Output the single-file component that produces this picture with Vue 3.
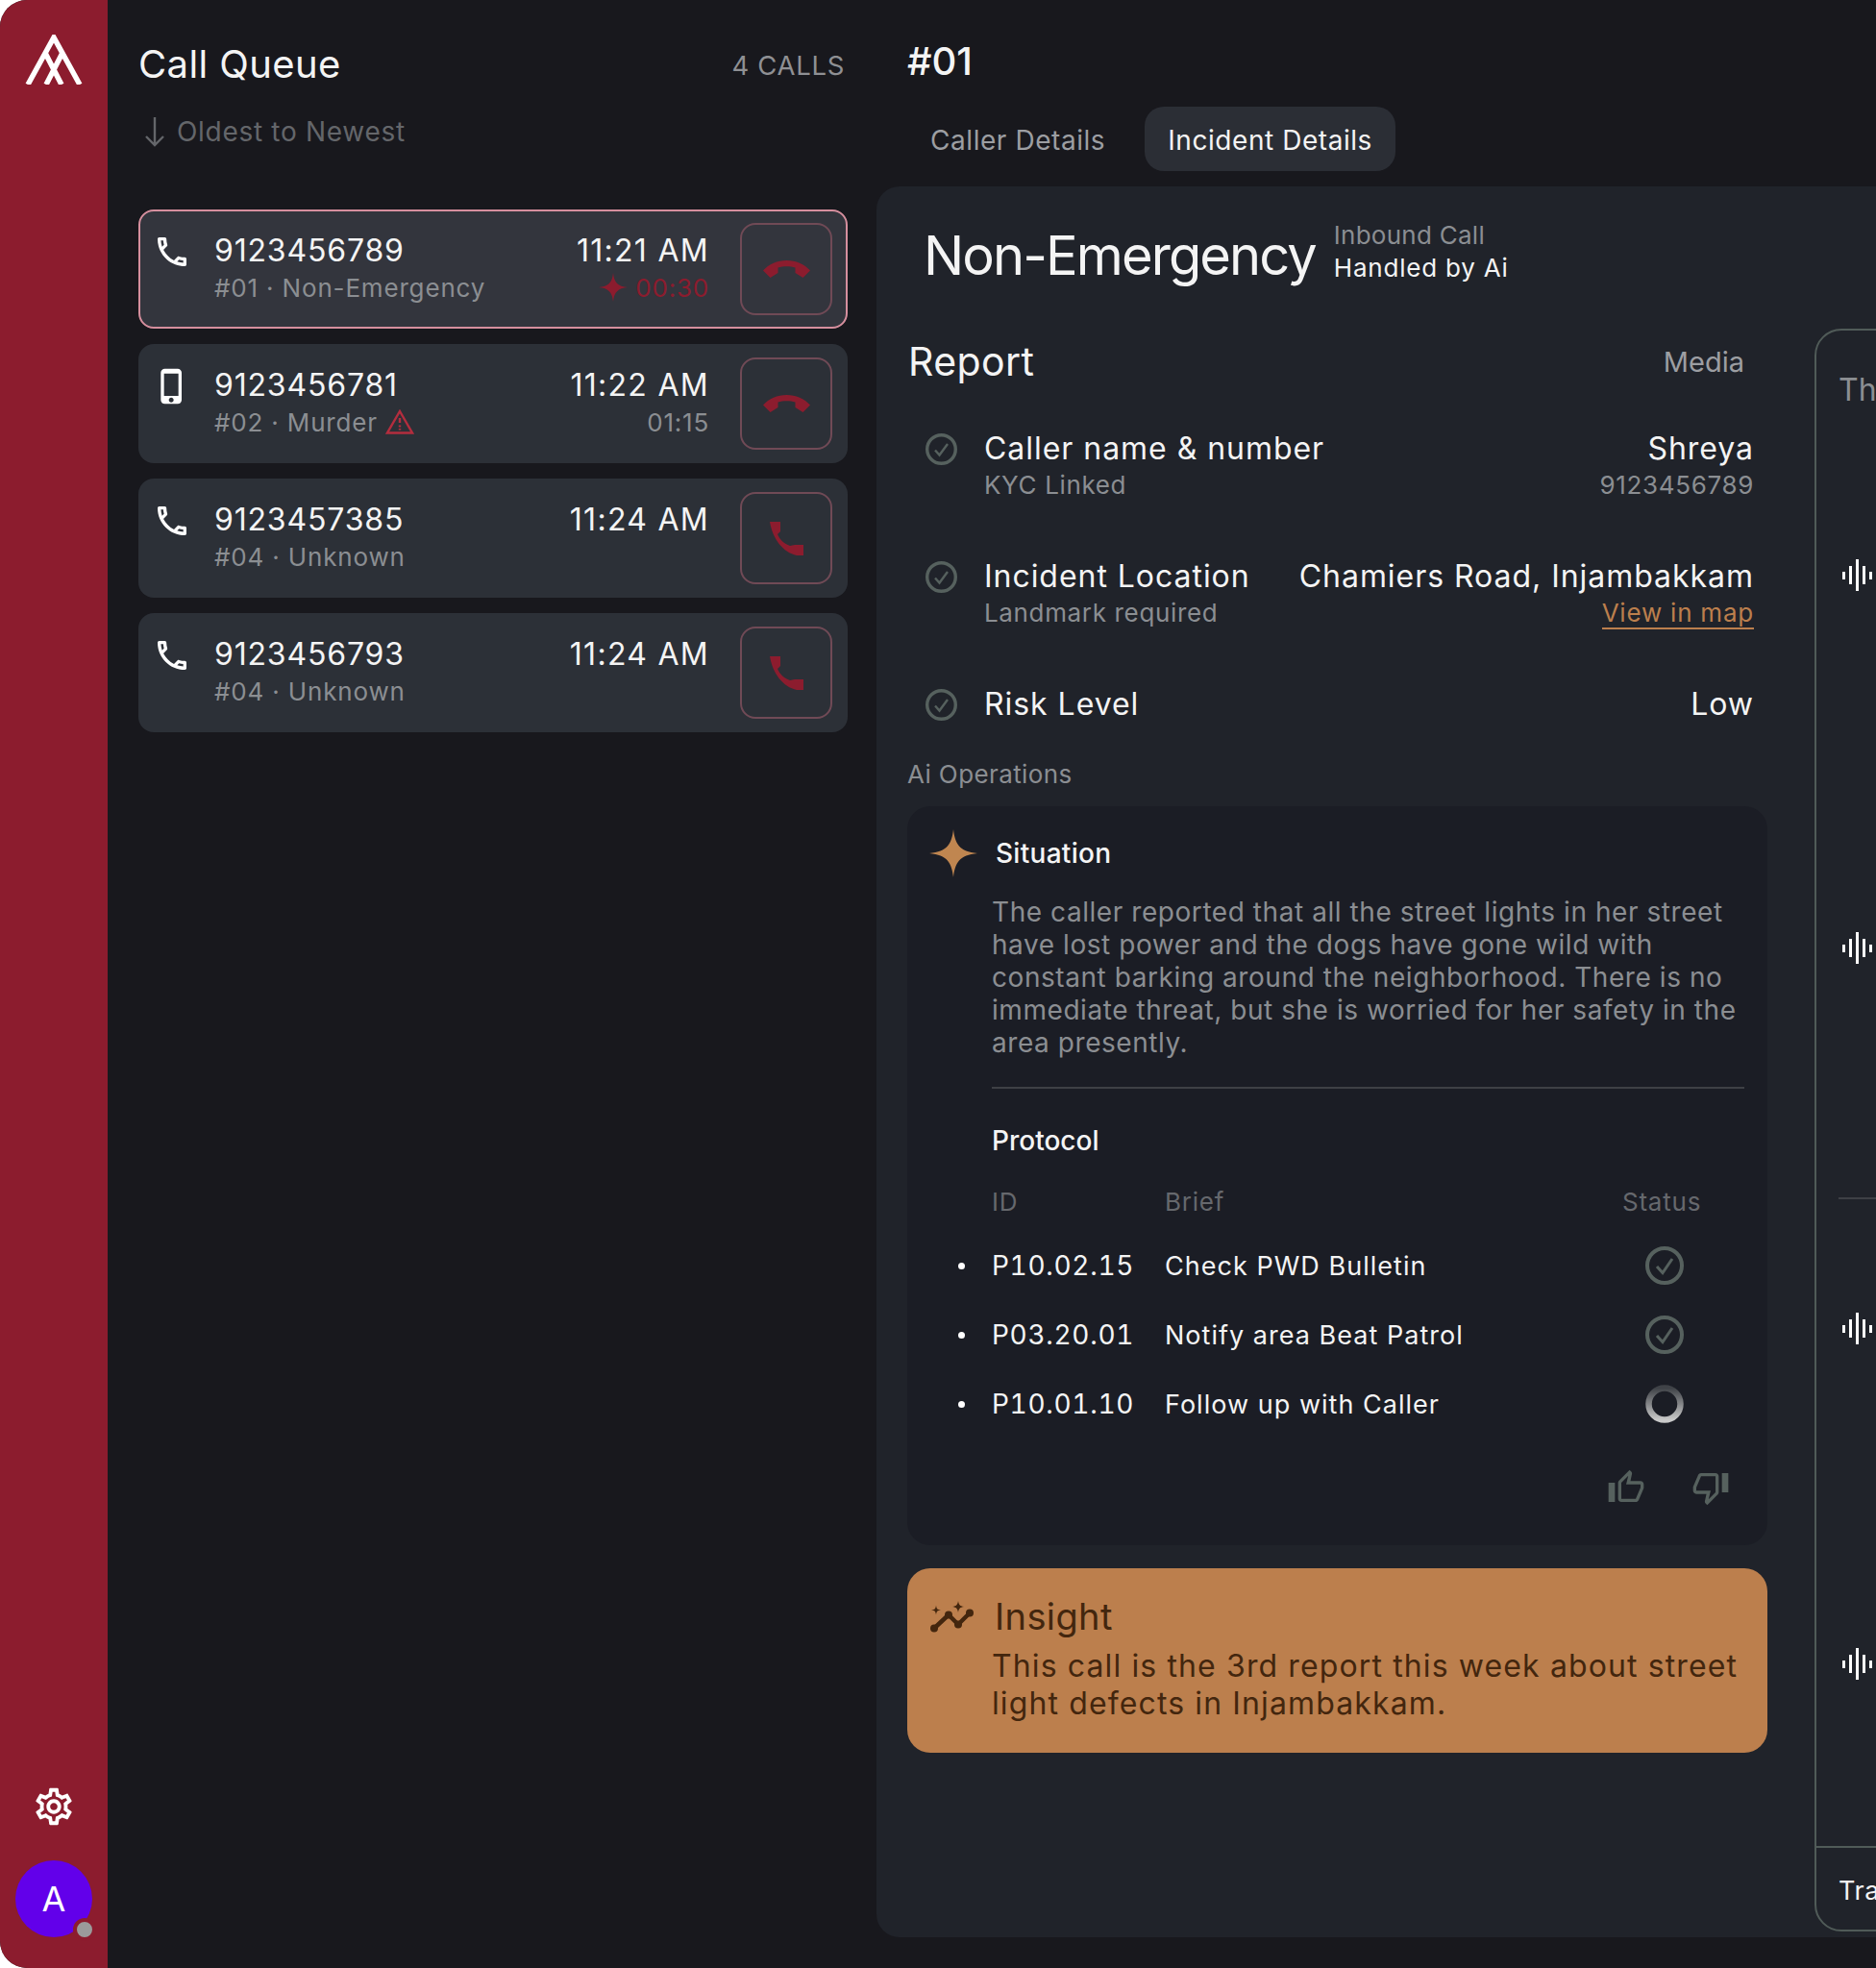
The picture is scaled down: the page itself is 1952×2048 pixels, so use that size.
<script setup>
const calls = [
  { number: '9123456789', meta: '#01 · Non-Emergency', time: '11:21 AM', timer: '00:30', device: 'phone', action: 'end', active: true },
  { number: '9123456781', meta: '#02 · Murder', time: '11:22 AM', elapsed: '01:15', device: 'mobile', action: 'end', warn: true },
  { number: '9123457385', meta: '#04 · Unknown', time: '11:24 AM', device: 'phone', action: 'answer' },
  { number: '9123456793', meta: '#04 · Unknown', time: '11:24 AM', device: 'phone', action: 'answer' }
]

const report = [
  { title: 'Caller name & number', sub: 'KYC Linked', value: 'Shreya', extra: '9123456789' },
  { title: 'Incident Location', sub: 'Landmark required', value: 'Chamiers Road, Injambakkam', link: 'View in map' },
  { title: 'Risk Level', value: 'Low' }
]

const protocol = [
  { id: 'P10.02.15', brief: 'Check PWD Bulletin', done: true },
  { id: 'P03.20.01', brief: 'Notify area Beat Patrol', done: true },
  { id: 'P10.01.10', brief: 'Follow up with Caller', done: false }
]

const phonePath = 'M6.54 5c.06.89.21 1.76.45 2.59l-1.2 1.2c-.41-1.2-.67-2.47-.76-3.79h1.51m9.86 12.02c.85.24 1.72.39 2.6.45v1.49c-1.32-.09-2.59-.35-3.8-.75l1.2-1.19M7.5 3H4c-.55 0-1 .45-1 1 0 9.39 7.61 17 17 17 .55 0 1-.45 1-1v-3.49c0-.55-.45-1-1-1-1.24 0-2.45-.2-3.57-.57-.1-.04-.21-.05-.31-.05-.26 0-.51.1-.71.29l-2.2 2.2c-2.83-1.45-5.15-3.76-6.59-6.59l2.2-2.2c.28-.28.36-.67.25-1.02C8.7 6.45 8.5 5.25 8.5 4c0-.55-.45-1-1-1z'
const mobilePath = 'M15.5 1h-8C6.12 1 5 2.12 5 3.5v17C5 21.88 6.12 23 7.5 23h8c1.38 0 2.5-1.12 2.5-2.5v-17C18 2.12 16.88 1 15.5 1zm-4 21c-.83 0-1.5-.67-1.5-1.5s.67-1.5 1.5-1.5 1.5.67 1.5 1.5-.67 1.5-1.5 1.5zm4.5-4H7V4h9v14z'
const hangupPath = 'M0 10.5C6 4 15 0 24.5 0S43 4 49 10.500L41.500 18 33.500 13V7.500C28 5.800 21 5.800 15.500 7.500V13L7.500 18Z'
const answerPath = 'M0 0H11V10L8 13C10 18 15 23 21 25L26 24H35V35H28C14 32 3 18 0 0Z'
const thumbPath = 'M9 21h9c.83 0 1.54-.5 1.84-1.22l3.02-7.05c.09-.23.14-.47.14-.73v-2c0-1.1-.9-2-2-2h-6.31l.95-4.57.03-.32c0-.41-.17-.79-.44-1.06L14.17 1 7.58 7.59C7.22 7.95 7 8.45 7 9v10c0 1.1.9 2 2 2zM9 9l4.34-4.34L12 10h9v2l-3 7H9V9zM1 9h4v12H1z'
const gearPath = 'M19.43 12.98c.04-.32.07-.64.07-.98s-.03-.66-.07-.98l2.11-1.65c.19-.15.24-.42.12-.64l-2-3.46c-.12-.22-.39-.3-.61-.22l-2.49 1c-.52-.4-1.08-.73-1.69-.98l-.38-2.65C14.46 2.18 14.25 2 14 2h-4c-.25 0-.46.18-.49.42l-.38 2.65c-.61.25-1.17.59-1.69.98l-2.49-1c-.23-.09-.49 0-.61.22l-2 3.46c-.13.22-.07.49.12.64l2.11 1.65c-.04.32-.07.65-.07.98s.03.66.07.98l-2.11 1.65c-.19.15-.24.42-.12.64l2 3.46c.12.22.39.3.61.22l2.49-1c.52.4 1.08.73 1.69.98l.38 2.65c.03.24.24.42.49.42h4c.25 0 .46-.18.49-.42l.38-2.65c.61-.25 1.17-.59 1.69-.98l2.49 1c.23.09.49 0 .61-.22l2-3.46c.12-.22.07-.49-.12-.64l-2.11-1.65zM17.45 11.27c.04.31.05.52.05.73 0 .21-.02.43-.05.73l-.14 1.13.89.7 1.08.84-.7 1.21-1.27-.51-1.04-.42-.9.68c-.43.32-.84.56-1.25.73l-1.06.43-.16 1.13-.2 1.35h-1.4l-.19-1.35-.16-1.13-1.06-.43c-.43-.18-.83-.41-1.23-.71l-.91-.7-1.06.43-1.27.51-.7-1.21 1.08-.84.89-.7-.14-1.13c-.03-.31-.05-.54-.05-.74s.02-.43.05-.73l.14-1.13-.89-.7-1.08-.84.7-1.21 1.27.51 1.04.42.9-.68c.43-.32.84-.56 1.25-.73l1.06-.43.16-1.13.2-1.35h1.39l.19 1.35.16 1.13 1.06.43c.43.18.83.41 1.23.71l.91.7 1.06-.43 1.27-.51.7 1.21-1.07.85-.89.7.14 1.13zM12 8c-2.21 0-4 1.79-4 4s1.79 4 4 4 4-1.79 4-4-1.79-4-4-4zm0 6c-1.1 0-2-.9-2-2s.9-2 2-2 2 .9 2 2-.9 2-2 2z'

// vertical room taken by each voice note in the transcript, the next bar sits below it
const notes = [
  { height: 388, rule: false },
  { height: 396, rule: true },
  { height: 349, rule: false },
  { height: 160, rule: false }
]
const bars = [8, 19, 33, 19, 8]
</script>

<template>
  <div class="app">
    <aside class="rail">
      <svg class="logo" width="60" height="52" viewBox="0 0 60 52" fill="none" stroke="#fff" stroke-width="5.5">
        <path d="M3 52 30 3 57 52" stroke-linejoin="miter" stroke-miterlimit="6" />
        <path d="M22 52 39 19M38 52 21 19" />
      </svg>
      <div class="rail-bottom">
        <svg class="gear" width="46" height="46" viewBox="0 0 24 24" fill="#fff"><path :d="gearPath" /></svg>
        <div class="avatar">A<span class="presence"></span></div>
      </div>
    </aside>

    <section class="queue">
      <header class="queue-head">
        <h1>Call Queue</h1>
        <span class="count">4 CALLS</span>
      </header>
      <div class="sort">
        <svg width="22" height="32" viewBox="0 0 22 32" fill="none" stroke="#64666a" stroke-width="2.4">
          <path d="M11 1v29M2 21l9 9 9-9" />
        </svg>
        Oldest to Newest
      </div>

      <ul class="cards">
        <li v-for="call in calls" :key="call.number" class="card" :class="{ active: call.active }">
          <svg class="device" width="40" height="40" viewBox="0 0 24 24" fill="#fff">
            <path :d="call.device === 'phone' ? phonePath : mobilePath" />
          </svg>
          <div class="card-main">
            <div class="number">{{ call.number }}</div>
            <div class="meta">
              {{ call.meta }}
              <svg v-if="call.warn" class="warn" width="30" height="26" viewBox="0 0 30 26" fill="none" stroke="#b32d3e" stroke-width="2.4">
                <path d="M15 2 28 24.5H2Z" />
                <path d="M15 9v5M15 16.5v2M15 20v1.6" />
              </svg>
            </div>
          </div>
          <div class="card-time">
            <div class="time">{{ call.time }}</div>
            <div v-if="call.timer" class="timer">
              <svg width="30" height="30" viewBox="0 0 30 30" fill="#8c1c2e"><path d="M15 0C16 10 20 14 30 15 20 16 16 20 15 30 14 20 10 16 0 15 10 14 14 10 15 0Z" /></svg>
              {{ call.timer }}
            </div>
            <div v-else-if="call.elapsed" class="elapsed">{{ call.elapsed }}</div>
          </div>
          <button class="call-btn" type="button">
            <svg v-if="call.action === 'end'" width="49" height="18" viewBox="0 0 49 18" fill="#8c1c2e"><path :d="hangupPath" /></svg>
            <svg v-else width="35" height="35" viewBox="0 0 35 35" fill="#8c1c2e"><path :d="answerPath" /></svg>
          </button>
        </li>
      </ul>
    </section>

    <main class="detail">
      <div class="ticket">#01</div>
      <nav class="tabs">
        <span class="tab">Caller Details</span>
        <span class="tab selected">Incident Details</span>
      </nav>

      <div class="panel">
        <div class="incident">
          <div class="incident-head">
            <h2>Non-Emergency</h2>
            <div class="incident-note">
              <div class="inbound">Inbound Call</div>
              <div class="handled">Handled by Ai</div>
            </div>
          </div>

          <div class="report-head">
            <h3>Report</h3>
            <span class="media">Media</span>
          </div>

          <div class="report">
            <div v-for="row in report" :key="row.title" class="report-row">
              <svg class="check" width="33" height="33" viewBox="0 0 33 33" fill="none" stroke="#56615e" stroke-width="3.4">
                <circle cx="16.500" cy="16.500" r="14.800" />
                <path d="M10 17.500l4.500 5L23 11" stroke-width="2.400" />
              </svg>
              <div class="report-left">
                <div class="report-title">{{ row.title }}</div>
                <div v-if="row.sub" class="report-sub">{{ row.sub }}</div>
              </div>
              <div class="report-right">
                <div class="report-title">{{ row.value }}</div>
                <div v-if="row.extra" class="report-sub">{{ row.extra }}</div>
                <a v-if="row.link" class="map-link">{{ row.link }}</a>
              </div>
            </div>
          </div>

          <div class="ai-label">Ai Operations</div>

          <div class="situation">
            <div class="situation-head">
              <svg class="star" width="50" height="50" viewBox="0 0 48 48" fill="#c08650"><path d="M24 0C25.500 14 30 22.500 48 24 30 25.500 25.500 34 24 48 22.500 34 18 25.500 0 24 18 22.500 22.500 14 24 0Z" /></svg>
              <span>Situation</span>
            </div>
            <div class="situation-body">
              <p class="summary">The caller reported that all the street lights in her street have lost power and the dogs have gone wild with constant barking around the neighborhood. There is no immediate threat, but she is worried for her safety in the area presently.</p>
              <div class="protocol-title">Protocol</div>
              <div class="protocol">
                <span></span><span class="th">ID</span><span class="th">Brief</span><span class="th">Status</span>
                <template v-for="item in protocol" :key="item.id">
                  <span class="bullet"></span>
                  <span class="td td-id">{{ item.id }}</span>
                  <span class="td">{{ item.brief }}</span>
                  <span class="status">
                    <svg v-if="item.done" width="40" height="40" viewBox="0 0 40 40" fill="none" stroke="#56615e" stroke-width="4">
                      <circle cx="20" cy="20" r="18" />
                      <path d="M12 21l6 6.500L28 13" stroke-width="3" />
                    </svg>
                    <svg v-else width="40" height="40" viewBox="0 0 40 40" fill="none">
                      <defs>
                        <linearGradient id="spin" x1="0" y1="0" x2="0" y2="1">
                          <stop offset="0" stop-color="#3f4247" />
                          <stop offset="1" stop-color="#c9c9c9" />
                        </linearGradient>
                      </defs>
                      <circle cx="20" cy="20" r="16.500" stroke="url(#spin)" stroke-width="6.500" />
                    </svg>
                  </span>
                </template>
              </div>
              <div class="feedback">
                <svg width="40" height="40" viewBox="0 0 24 24" fill="#56615e"><path :d="thumbPath" /></svg>
                <svg class="down" width="40" height="40" viewBox="0 0 24 24" fill="#56615e"><path :d="thumbPath" /></svg>
              </div>
            </div>
          </div>

          <div class="insight">
            <div class="insight-head">
              <svg width="46" height="33" viewBox="0 0 46 33" fill="none">
                <path d="M4 28.500 19 14.500 29 24.500 41 12.500" stroke="#43260e" stroke-width="4.500" stroke-linejoin="round" />
                <g fill="#43260e">
                  <circle cx="4" cy="28.500" r="4" />
                  <circle cx="19" cy="14.500" r="4" />
                  <circle cx="29" cy="24.500" r="4" />
                  <circle cx="41" cy="12.500" r="4" />
                  <path d="M6 4.500c.5 3.800 1.200 4.500 5 5-3.800.5-4.500 1.200-5 5-.5-3.800-1.200-4.500-5-5 3.800-.5 4.500-1.200 5-5Z" />
                  <path d="M29 0c.7 4.200 1.800 5.300 6 6-4.200.7-5.300 1.800-6 6-.7-4.200-1.800-5.300-6-6 4.200-.7 5.300-1.800 6-6Z" />
                </g>
              </svg>
              <span>Insight</span>
            </div>
            <p>This call is the 3rd report this week about street light defects in Injambakkam.</p>
          </div>
        </div>

        <div class="transcript">
          <div class="transcript-title">Th</div>
          <div class="notes">
            <div v-for="(note, i) in notes" :key="i" class="note" :class="{ ruled: note.rule }" :style="{ height: note.height + 'px' }">
              <div class="wave">
                <i v-for="(bar, j) in bars" :key="j" :style="{ height: bar + 'px' }"></i>
              </div>
            </div>
          </div>
          <div class="transcript-foot">Tra</div>
        </div>
      </div>
    </main>
  </div>
</template>

<style>
html, body { margin: 0; background: #fff; overflow: hidden; }
</style>

<style scoped>
* { box-sizing: border-box; }
.app {
  display: flex;
  width: 1952px;
  height: 2048px;
  overflow: hidden;
  background: #18181d;
  border-radius: 28px 0 0 28px;
  color: #f4f4f4;
  font-family: Inter, "Liberation Sans", sans-serif;
}
h1, h2, h3, p, ul { margin: 0; padding: 0; font-weight: 400; }

.rail {
  flex: 0 0 112px;
  display: flex;
  flex-direction: column;
  justify-content: space-between;
  align-items: center;
  padding: 36px 0 32px;
  background: #8c1c2e;
}
.rail-bottom { display: flex; flex-direction: column; align-items: center; gap: 33px; }
.avatar {
  position: relative;
  width: 80px;
  height: 80px;
  border-radius: 50%;
  background: #6200ea;
  color: #fff;
  font-size: 36px;
  line-height: 80px;
  text-align: center;
}
.presence {
  position: absolute;
  right: -4px;
  bottom: -4px;
  width: 24px;
  height: 24px;
  border-radius: 50%;
  background: #9b9b9b;
  border: 4px solid #8c1c2e;
}

.queue { flex: 0 0 738px; margin-left: 32px; padding-top: 42px; }
.queue-head { display: flex; justify-content: space-between; align-items: center; height: 48px; padding-right: 3px; }
.queue-head h1 { font-size: 40px; letter-spacing: 0.01em; }
.count { margin-top: 3px; font-size: 27.5px; color: #8f9094; letter-spacing: 0.025em; }
.sort {
  display: flex;
  align-items: center;
  gap: 12px;
  height: 36px;
  margin-top: 29px;
  padding-left: 6px;
  font-size: 28px;
  letter-spacing: 0.025em;
  color: #64666a;
}
.cards { list-style: none; margin-top: 63px; display: flex; flex-direction: column; gap: 16px; }
.card {
  display: flex;
  height: 124px;
  padding: 14px 16px 14px 15px;
  border-radius: 16px;
  background: #2c3037;
}
.card.active { background: #33353d; border: 2px solid #d68f9e; padding: 12px 14px 12px 13px; }
.device { margin: 10px 24px 0 0; flex: none; }
.card-main { flex: 1; }
.number { margin-top: 9px; font-size: 32px; line-height: 40px; letter-spacing: 0.026em; }
.meta { display: flex; align-items: center; gap: 8px; height: 36px; font-size: 26px; letter-spacing: 0.032em; color: #8b8e92; }
.card-time { flex: none; margin-right: 32px; text-align: right; }
.time { margin-top: 9px; font-size: 32px; line-height: 40px; letter-spacing: 0.04em; }
.timer, .elapsed { display: flex; align-items: center; justify-content: flex-end; gap: 8px; height: 36px; font-size: 26px; letter-spacing: 0.03em; }
.timer { color: #8c1c2e; }
.elapsed { color: #8b8e92; }
.call-btn {
  flex: none;
  display: flex;
  align-items: center;
  justify-content: center;
  width: 96px;
  height: 96px;
  padding: 0;
  background: none;
  border: 2px solid #704a56;
  border-radius: 16px;
}

.detail { flex: 1; margin-left: 30px; padding-top: 42px; min-width: 0; }
.ticket { padding-left: 32px; font-size: 40px; line-height: 44px; font-weight: 500; }
.tabs { display: flex; height: 67px; margin-top: 25px; margin-left: 32px; }
.tab { display: flex; align-items: center; padding: 2px 24px 0; font-size: 28px; letter-spacing: 0.02em; color: #9c9ea2; }
.tab.selected { margin-left: 17px; background: #2b2e35; border-radius: 20px; color: #f4f4f4; }

.panel {
  display: flex;
  gap: 49px;
  width: 1400px;
  height: 1822px;
  margin-top: 16px;
  padding-left: 32px;
  background: #20232a;
  border-radius: 24px;
}
.incident { flex: 0 0 895px; }
.incident-head { display: flex; align-items: flex-start; gap: 19px; height: 107px; padding: 31px 0 0 17px; }
.incident-head h2 { font-size: 56px; letter-spacing: -0.034em; line-height: 68px; margin-top: 7px; }
.incident-note { margin-top: 3px; font-size: 26px; line-height: 34px; letter-spacing: 0.03em; }
.inbound { color: #8b8e92; letter-spacing: 0.01em; }
.report-head { display: flex; justify-content: space-between; align-items: center; height: 48px; margin-top: 51px; padding: 0 24px 0 1px; }
.report-head h3 { font-size: 41px; letter-spacing: 0.01em; }
.media { font-size: 29px; color: #9c9ea2; }
.report { display: flex; flex-direction: column; gap: 57px; margin-top: 48px; padding: 0 14px 0 19px; }
.report-row { display: flex; align-items: flex-start; }
.check { flex: none; margin: 3px 28px 0 0; }
.report-left { flex: 1; }
.report-right { text-align: right; }
.report-title { font-size: 32px; line-height: 38px; letter-spacing: 0.03em; }
.report-sub { font-size: 26px; line-height: 38px; letter-spacing: 0.025em; color: #8b8e92; }
.map-link {
  display: inline-block;
  margin-top: 3px;
  font-size: 26px;
  line-height: 31px;
  letter-spacing: 0.03em;
  color: #bc7f4d;
  border-bottom: 2px solid #bc7f4d;
}
.ai-label { margin-top: 38px; font-size: 26px; line-height: 32px; letter-spacing: 0.015em; color: #8b8e92; }

.situation { height: 769px; margin-top: 17px; padding: 24px 24px 0; background: #1b1d25; border-radius: 24px; }
.situation-head { display: flex; align-items: center; gap: 19px; font-size: 28px; font-weight: 500; letter-spacing: 0.01em; }
.star { margin-left: -1px; }
.situation-body { padding-left: 64px; }
.summary {
  margin-top: 19px;
  padding-bottom: 29px;
  border-bottom: 2px solid #3e4045;
  font-size: 28px;
  line-height: 34px;
  letter-spacing: 0.02em;
  color: #8b8e92;
}
.protocol-title { margin-top: 36px; font-size: 28px; line-height: 36px; font-weight: 500; }
.protocol {
  display: grid;
  grid-template-columns: 40px 180px 476px 1fr;
  grid-template-rows: 64px;
  grid-auto-rows: 72px;
  align-items: center;
  margin-left: -40px;
  margin-top: 12px;
}
.th { font-size: 26px; letter-spacing: 0.03em; color: #66686d; align-self: start; padding-top: 18px; }
.td { font-size: 27px; letter-spacing: 0.038em; }
.td-id { font-size: 28px; letter-spacing: 0.025em; font-variant-numeric: tabular-nums; }
.bullet { justify-self: start; width: 7px; height: 7px; margin-left: 5px; border-radius: 50%; background: #fff; }
.status { display: flex; padding-left: 24px; }
.feedback { display: flex; justify-content: flex-end; gap: 48px; margin-top: 31px; padding-right: 15px; }
.down { transform: rotate(180deg); }

.insight { height: 192px; margin-top: 24px; padding: 26px 24px 0; background: #bc7f4d; border-radius: 24px; color: #43260e; }
.insight-head { display: flex; align-items: center; gap: 21px; height: 48px; font-size: 38px; letter-spacing: 0.01em; }
.insight p { margin-top: 8px; padding-left: 64px; font-size: 32px; line-height: 39px; letter-spacing: 0.035em; }

.transcript {
  flex: none;
  display: flex;
  flex-direction: column;
  width: 600px;
  height: 1668px;
  margin-top: 148px;
  border: 2px solid #505b58;
  border-radius: 28px;
}
.transcript-title { padding: 44px 0 0 23px; font-size: 32px; line-height: 36px; color: #8b8e92; }
.notes { flex: 1; padding: 158px 0 0 23px; }
.note.ruled { position: relative; }
.note.ruled::after { content: ""; position: absolute; left: 0; right: 0; top: 276px; height: 2px; background: #3e4045; }
.wave { display: flex; align-items: center; gap: 4px; height: 33px; margin-left: 4px; }
.wave i { display: block; width: 3px; background: #fff; }
.transcript-foot { padding: 26px 0 0 23px; height: 87px; border-top: 2px solid #505b58; font-size: 27px; line-height: 38px; letter-spacing: 0.02em; }
</style>
